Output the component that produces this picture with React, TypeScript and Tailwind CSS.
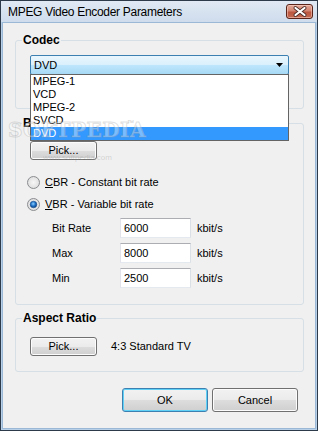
import React from "react";

function Radio({ checked }: { checked?: boolean }) {
  return (
    <svg width="13" height="13" viewBox="0 0 13 13" className="shrink-0">
      <defs>
        <radialGradient id={checked ? "rg1" : "rg0"} cx="50%" cy="50%" r="60%">
          <stop offset="0%" stopColor="#f7f7f7" />
          <stop offset="70%" stopColor="#e2e2e2" />
          <stop offset="100%" stopColor="#cfcfcf" />
        </radialGradient>
        <radialGradient id="dot" cx="45%" cy="40%" r="60%">
          <stop offset="0%" stopColor="#8fd0ff" />
          <stop offset="55%" stopColor="#1f73c9" />
          <stop offset="100%" stopColor="#0c3f7e" />
        </radialGradient>
      </defs>
      <circle cx="6.5" cy="6.5" r="6" fill={`url(#${checked ? "rg1" : "rg0"})`} stroke="#8a8d90" strokeWidth="1" />
      {checked && <circle cx="6.5" cy="6.5" r="3.3" fill="url(#dot)" stroke="#174f8f" strokeWidth="0.6" />}
    </svg>
  );
}

function Btn({ children, w, h, focused }: { children: React.ReactNode; w: string; h: string; focused?: boolean }) {
  return (
    <div
      className={`${w} ${h} rounded-[3px] border ${
        focused ? "border-[#3c7fb1] shadow-[inset_0_0_0_1px_#5fd1f7]" : "border-[#707070] shadow-[inset_0_0_0_1px_#fcfcfc]"
      } bg-[linear-gradient(to_bottom,#f2f2f2_0%,#ebebeb_50%,#dddddd_51%,#cfcfcf_100%)] flex items-center justify-center text-[11px] text-black`}
    >
      {children}
    </div>
  );
}

function Field({ label, value }: { label: string; value: string }) {
  return (
    <div className="flex items-center h-[20px]">
      <div className="w-[68px] pl-[25px] shrink-0 box-content text-[11px]">{label}</div>
      <div className="w-[71px] h-[20px] border border-[#abadb3] border-r-[#dbdfe6] border-b-[#e3e9ef] border-l-[#e2e3ea] bg-white flex items-center pl-[3px] text-[11px]">
        {value}
      </div>
      <div className="ml-[6px] text-[11px]">kbit/s</div>
    </div>
  );
}

export default function App() {
  return (
    <div className="w-[318px] h-[431px] border border-[#2d3a49] bg-[#b9d0e9] flex flex-col relative overflow-hidden font-['Liberation_Sans',Arial,sans-serif] text-black">
      {/* Title bar */}
      <div className="h-[21px] shrink-0 flex items-center justify-between pl-[7px] pr-[4px] bg-[linear-gradient(to_bottom,#e0e9f4,#cfdcec)]">
        <div className="text-[12px] leading-none tracking-[-0.3px]">MPEG Video Encoder Parameters</div>
        <div className="w-[27px] h-[15px] rounded-[3px] border border-[#5a241a] bg-[linear-gradient(to_bottom,#e3a898_0%,#d28470_45%,#bb5640_55%,#c46a52_100%)] flex items-center justify-center shadow-[inset_0_0_0_1px_rgba(255,220,210,0.5)]">
          <svg width="14" height="11" viewBox="0 0 14 11">
            <path d="M2.5 2 L11.5 9 M11.5 2 L2.5 9" stroke="#4a2a26" strokeWidth="3.8" strokeLinecap="round" />
            <path d="M2.5 2 L11.5 9 M11.5 2 L2.5 9" stroke="#ffffff" strokeWidth="2.2" strokeLinecap="round" />
          </svg>
        </div>
      </div>

      {/* Client */}
      <div className="flex-1 mx-[1px] mb-[1px] border border-[#9cb8d7] bg-[#f0f0f0] flex flex-col pl-[12px] pr-[11px] relative">
        {/* Codec group */}
        <div className="mt-[17px] h-[69px] relative border border-[#d5dfe5] rounded-[3px] pt-[14px] pl-[14px] z-10">
          <span className="absolute -top-[8px] left-[6px] bg-[#f0f0f0] px-[1px] text-[12px] font-bold leading-[14px]">Codec</span>
          <div className="relative w-[259px]">
            <div className="w-[259px] h-[20px] rounded-[2px] border border-[#3c7fb1] bg-[linear-gradient(to_bottom,#eaf6fd_0%,#d9f0fc_50%,#bee6fd_51%,#a7d9f5_100%)] flex items-center justify-between pl-[3px] pr-[5px] text-[11px]">
              <span>DVD</span>
              <svg width="7" height="4" viewBox="0 0 7 4">
                <path d="M0 0 H7 L3.5 4 Z" fill="#000" />
              </svg>
            </div>
            <div className="absolute top-[19px] left-0 w-[259px] h-[67px] border border-[#646464] bg-white flex flex-col text-[11px] leading-[13px]">
              <div className="h-[13px] pl-[2px]">MPEG-1</div>
              <div className="h-[13px] pl-[2px]">VCD</div>
              <div className="h-[13px] pl-[2px]">MPEG-2</div>
              <div className="h-[13px] pl-[2px]">SVCD</div>
              <div className="h-[13px] pl-[2px] bg-[#3399ff] text-white">DVD</div>
            </div>
          </div>
        </div>

        {/* Bitrate group */}
        <div className="mt-[14px] h-[182px] relative border border-[#d5dfe5] rounded-[3px] pt-[17px] pl-[11px] flex flex-col">
          <span className="absolute -top-[8px] left-[6px] bg-[#f0f0f0] px-[1px] text-[12px] font-bold leading-[14px]">Bitrate</span>
          <div className="ml-[3px]">
            <Btn w="w-[67px]" h="h-[19px]">Pick...</Btn>
          </div>
          <div className="mt-[15px] flex items-center gap-[5px] h-[14px] text-[11px]">
            <Radio />
            <span>
              <u>C</u>BR - Constant bit rate
            </span>
          </div>
          <div className="mt-[8px] flex items-center gap-[5px] h-[14px] text-[11px]">
            <Radio checked />
            <span>
              <u>V</u>BR - Variable bit rate
            </span>
          </div>
          <div className="mt-[7px] flex flex-col gap-[5px]">
            <Field label="Bit Rate" value="6000" />
            <Field label="Max" value="8000" />
            <Field label="Min" value="2500" />
          </div>
        </div>

        {/* Aspect Ratio group */}
        <div className="mt-[13px] h-[54px] relative border border-[#d5dfe5] rounded-[3px] pt-[18px] pl-[14px] flex items-start">
          <span className="absolute -top-[8px] left-[6px] bg-[#f0f0f0] px-[1px] text-[12px] font-bold leading-[14px]">Aspect Ratio</span>
          <Btn w="w-[67px]" h="h-[19px]">Pick...</Btn>
          <div className="ml-[14px] h-[19px] flex items-center text-[11px]">4:3 Standard TV</div>
        </div>

        {/* Buttons */}
        <div className="mt-[16px] flex justify-end gap-[4px] mr-[6px]">
          <Btn w="w-[86px]" h="h-[24px]" focused>OK</Btn>
          <Btn w="w-[86px]" h="h-[24px]">Cancel</Btn>
        </div>

        {/* Watermark */}
        <div className="absolute left-[5px] top-[97px] z-20 pointer-events-none select-none text-[20px] leading-[20px] font-bold tracking-[0.5px] text-[rgba(255,255,255,0.35)] [-webkit-text-stroke:1px_rgba(150,150,150,0.3)] font-['DejaVu_Serif',serif]">
          SOFTPEDIA
        </div>
        <div className="absolute left-[124px] top-[95px] z-20 pointer-events-none text-[7px] text-[rgba(150,150,150,0.5)]">™</div>
        <div className="absolute left-[40px] top-[129px] z-20 pointer-events-none text-[8px] text-[rgba(150,150,150,0.35)]">www.softpedia.com</div>
      </div>
    </div>
  );
}
